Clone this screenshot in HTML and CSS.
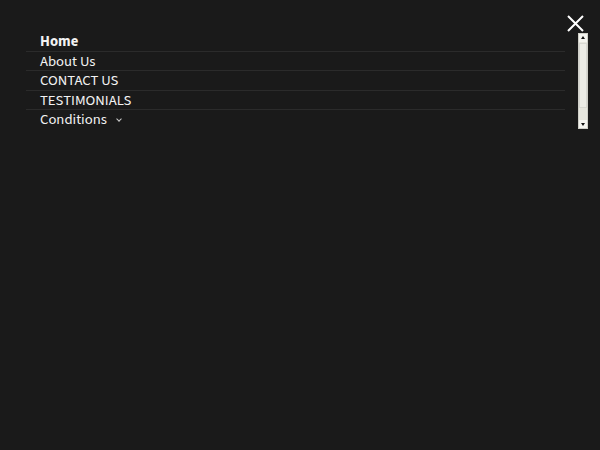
FILE: index.html
```html
<!DOCTYPE html>
<html lang="en">
<head>
  <meta charset="UTF-8">
  <title>Menu</title>
  <link rel="stylesheet" href="styles.css">
</head>
<body>
  <!-- Mobile menu overlay -->
  <div class="mobile-menu">
    <button class="close-btn" aria-label="Close">
      <svg width="17" height="17" viewBox="0 0 17 17">
        <path d="M1 1 L16 16 M16 1 L1 16" stroke="#fff" stroke-width="2" fill="none"/>
      </svg>
    </button>
    <div class="menu-body">
      <ul class="menu-list">
        <li class="active"><a href="#">Home</a></li>
        <li><a href="#">About Us</a></li>
        <li><a href="#">CONTACT US</a></li>
        <li><a href="#">TESTIMONIALS</a></li>
        <li class="has-sub"><a href="#">Conditions <span class="caret"></span></a></li>
      </ul>
      <!-- Scrollbar of the list -->
      <div class="scrollbar">
        <div class="sb-btn sb-up"></div>
        <div class="sb-track"><div class="sb-thumb"></div></div>
        <div class="sb-btn sb-down"></div>
      </div>
    </div>
  </div>
</body>
</html>
```

FILE: styles.css
```css
* {
  margin: 0;
  padding: 0;
  box-sizing: border-box;
}
body {
  font-family: "Source Sans 3", Roboto, sans-serif;
  background: #1a1a1a;
  color: #f2f2f2;
  height: 100vh;
  overflow: hidden;
}
.mobile-menu {
  position: relative;
  height: 100%;
  padding: 32px 12px 0 26px;
}
/* Botão de fechar */
.close-btn {
  position: absolute;
  top: 15px;
  right: 16px;
  background: none;
  border: none;
  cursor: pointer;
  line-height: 0;
}
.menu-body {
  display: flex;
  align-items: flex-start;
  gap: 13px;
}
.menu-list {
  list-style: none;
  flex: 1;
}
.menu-list li {
  border-bottom: 1px solid #2b2b2b;
}
.menu-list li:last-child {
  border-bottom: none;
}
.menu-list a {
  display: block;
  padding: 2px 0 0 14px;
  color: #f2f2f2;
  text-decoration: none;
  font-size: 14.7px;
  line-height: 16.5px;
}
.menu-list .active a {
  font-weight: 700;
}
.caret {
  display: inline-block;
  width: 4px;
  height: 4px;
  margin-left: 7px;
  border-right: 1px solid #ccc;
  border-bottom: 1px solid #ccc;
  transform: rotate(45deg);
  vertical-align: 3px;
}
/* Barra de rolagem */
.scrollbar {
  width: 10px;
  height: 96px;
  margin-top: 1px;
  display: flex;
  flex-direction: column;
  background: #e6e6de;
  border: 1px solid #cfcfc8;
}
.sb-btn {
  height: 8px;
  position: relative;
  background: #f4f4ef;
}
.sb-btn::after {
  content: "";
  position: absolute;
  left: 2px;
  border-left: 2px solid transparent;
  border-right: 2px solid transparent;
}
.sb-up::after {
  top: 2px;
  border-bottom: 3px solid #111;
}
.sb-down::after {
  bottom: 2px;
  border-top: 3px solid #111;
}
.sb-track {
  flex: 1;
  padding: 1px 0 12px;
}
.sb-thumb {
  height: 100%;
  background: #ecece6;
  border: 1px solid #d8d8d2;
}
```
